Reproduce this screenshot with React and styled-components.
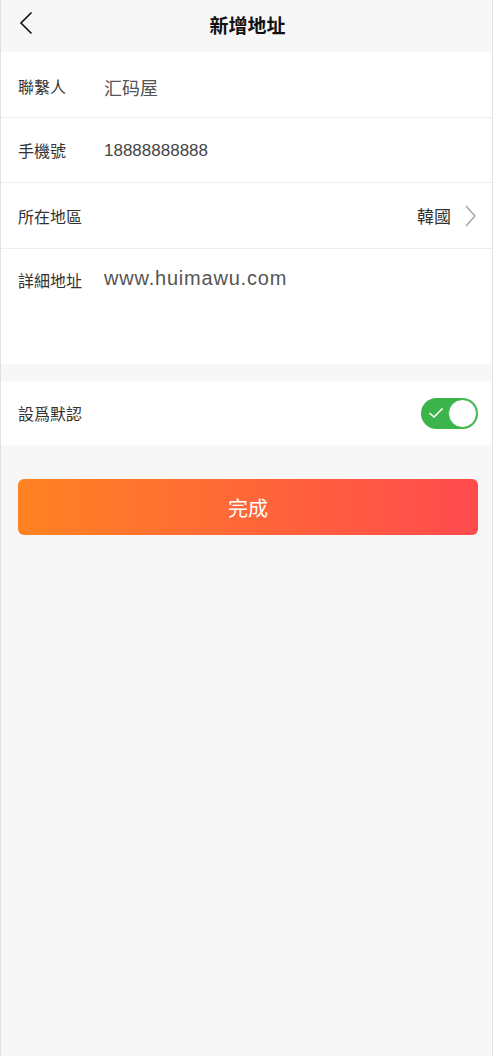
import React, { useState } from 'react';
import styled, { createGlobalStyle } from 'styled-components';

const GlobalStyle = createGlobalStyle`
  html, body {
    margin: 0;
    padding: 0;
    background: #fff;
  }
  body {
    font-family: "Liberation Sans", "Noto Sans CJK TC", "Noto Sans CJK SC", sans-serif;
  }
`;

const Page = styled.div`
  width: 491px;
  min-height: 1056px;
  background: #f7f7f7;
  border-left: 1px solid #dfe1e6;
  border-right: 1px solid #dfe1e6;
  display: flex;
  flex-direction: column;
`;

const Header = styled.div`
  height: 52px;
  display: flex;
  align-items: center;
  justify-content: center;
  position: relative;
  background: #f7f7f7;
`;

const BackBtn = styled.button`
  position: absolute;
  left: 11px;
  top: 8px;
  width: 28px;
  height: 30px;
  padding: 0;
  border: none;
  background: transparent;
  display: flex;
  align-items: center;
  justify-content: center;
`;

const Title = styled.h1`
  margin: 0 0 0 2px;
  font-size: 19px;
  font-weight: 700;
  color: #111;
  line-height: 1;
`;

const Group = styled.div`
  background: #fff;
  margin-bottom: ${(p) => p.gap || 0}px;
`;

const Row = styled.div`
  display: flex;
  align-items: ${(p) => (p.top ? 'flex-start' : 'center')};
  height: ${(p) => p.h || 65}px;
  padding: ${(p) => (p.top ? '19px 14px 0 17px' : '0 14px 0 17px')};
  box-sizing: border-box;
  border-bottom: ${(p) => (p.last ? 'none' : '1px solid #eeeeee')};
`;

const Label = styled.span`
  width: 86px;
  flex-shrink: 0;
  font-size: 16px;
  color: #333;
  margin-top: ${(p) => p.nudge || 0}px;
`;

const Value = styled.span`
  flex: 1;
  font-size: ${(p) => p.size || 18}px;
  color: ${(p) => p.color || '#555'};
  letter-spacing: ${(p) => p.ls || 0}px;
  margin-top: ${(p) => p.nudge || 0}px;
`;

const Picked = styled.div`
  display: flex;
  align-items: center;
  gap: 14px;
  font-size: 17px;
  color: #333;
  padding-right: 2px;
`;

const Track = styled.button`
  width: 57px;
  height: 31px;
  border-radius: 16px;
  border: none;
  padding: 0;
  background: ${(p) => (p.on ? '#3bb54b' : '#ddd')};
  display: flex;
  align-items: center;
  justify-content: space-between;
  cursor: pointer;
`;

const Knob = styled.span`
  width: 27px;
  height: 27px;
  border-radius: 50%;
  background: #fff;
  border: 1px solid #3bb54b;
  margin-right: 1px;
`;

const Tick = styled.span`
  display: flex;
  padding-left: 7px;
`;

const Actions = styled.div`
  padding: 34px 14px 0 17px;
`;

const Submit = styled.button`
  width: 100%;
  height: 56px;
  border: none;
  border-radius: 6px;
  background: linear-gradient(90deg, #ff8322 0%, #ff4a4e 100%);
  color: #fff;
  font-size: 20px;
  font-family: inherit;
  cursor: pointer;
`;

const App = () => {
  const [isDefault, setIsDefault] = useState(true);

  return (
    <Page>
      <GlobalStyle />
      <Header>
        <BackBtn>
          <svg width="14" height="24" viewBox="0 0 14 24">
            <path d="M12.5 1.5 L2 12 L12.5 22.5" fill="none" stroke="#111" strokeWidth="1.6" />
          </svg>
        </BackBtn>
        <Title>新增地址</Title>
      </Header>

      <Group gap={17}>
        <Row h={66}>
          <Label nudge={2}>聯繫人</Label>
          <Value nudge={4}>汇码屋</Value>
        </Row>
        <Row h={65}>
          <Label>手機號</Label>
          <Value size={17} color="#444" nudge={2}>18888888888</Value>
        </Row>
        <Row h={66}>
          <Label>所在地區</Label>
          <Value />
          <Picked>
            韓國
            <svg width="11" height="22" viewBox="0 0 11 22">
              <path d="M1 1 L10 11 L1 21" fill="none" stroke="#999" strokeWidth="1.2" />
            </svg>
          </Picked>
        </Row>
        <Row top h={115} last>
          <Label>詳細地址</Label>
          <Value size={20} ls={0.8} nudge={-1}>www.huimawu.com</Value>
        </Row>
      </Group>

      <Group>
        <Row h={64} last>
          <Label>設爲默認</Label>
          <Value />
          <Track on={isDefault} onClick={() => setIsDefault(!isDefault)}>
            <Tick>
              <svg width="16" height="12" viewBox="0 0 16 12">
                <path d="M1.5 6 L6 10 L14.5 1.5" fill="none" stroke="#fff" strokeWidth="1.6" />
              </svg>
            </Tick>
            <Knob />
          </Track>
        </Row>
      </Group>

      <Actions>
        <Submit>完成</Submit>
      </Actions>
    </Page>
  );
};

export default App;
